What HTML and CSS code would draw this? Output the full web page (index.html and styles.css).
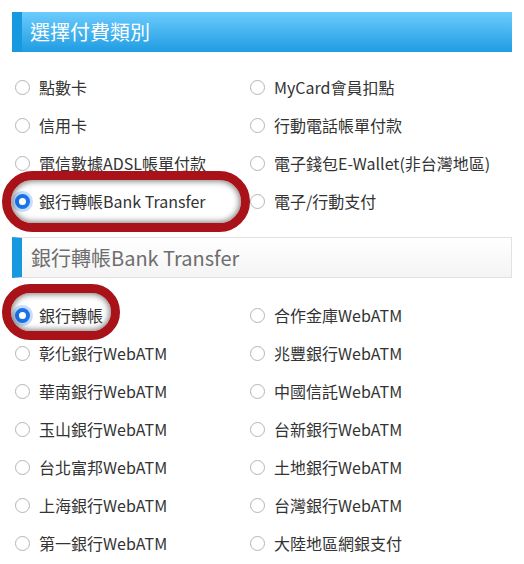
FILE: index.html
```html
<!DOCTYPE html>
<html lang="zh-Hant">
<head>
    <meta charset="UTF-8">
    <meta name="viewport" content="width=device-width, initial-scale=1.0">
    <title>選擇付費類別</title>
    <link rel="stylesheet" href="styles.css">
</head>
<body>
    <div class="page">
        <h2 class="title-main">選擇付費類別</h2>
        <div class="options options-top">
            <label class="option"><input type="radio" name="type"><span>點數卡</span></label>
            <label class="option"><input type="radio" name="type"><span>MyCard會員扣點</span></label>
            <label class="option"><input type="radio" name="type"><span>信用卡</span></label>
            <label class="option"><input type="radio" name="type"><span>行動電話帳單付款</span></label>
            <label class="option"><input type="radio" name="type"><span>電信數據ADSL帳單付款</span></label>
            <label class="option"><input type="radio" name="type"><span>電子錢包E-Wallet(非台灣地區)</span></label>
            <label class="option"><input type="radio" name="type" checked><span>銀行轉帳Bank Transfer</span></label>
            <label class="option"><input type="radio" name="type"><span>電子/行動支付</span></label>
        </div>

        <h2 class="title-sub">銀行轉帳Bank Transfer</h2>
        <div class="options options-bank">
            <label class="option"><input type="radio" name="bank" checked><span>銀行轉帳</span></label>
            <label class="option"><input type="radio" name="bank"><span>合作金庫WebATM</span></label>
            <label class="option"><input type="radio" name="bank"><span>彰化銀行WebATM</span></label>
            <label class="option"><input type="radio" name="bank"><span>兆豐銀行WebATM</span></label>
            <label class="option"><input type="radio" name="bank"><span>華南銀行WebATM</span></label>
            <label class="option"><input type="radio" name="bank"><span>中國信託WebATM</span></label>
            <label class="option"><input type="radio" name="bank"><span>玉山銀行WebATM</span></label>
            <label class="option"><input type="radio" name="bank"><span>台新銀行WebATM</span></label>
            <label class="option"><input type="radio" name="bank"><span>台北富邦WebATM</span></label>
            <label class="option"><input type="radio" name="bank"><span>土地銀行WebATM</span></label>
            <label class="option"><input type="radio" name="bank"><span>上海銀行WebATM</span></label>
            <label class="option"><input type="radio" name="bank"><span>台灣銀行WebATM</span></label>
            <label class="option"><input type="radio" name="bank"><span>第一銀行WebATM</span></label>
            <label class="option"><input type="radio" name="bank"><span>大陸地區網銀支付</span></label>
        </div>

        <!-- red marker rings drawn over the screenshot -->
        <div class="marker marker-type"></div>
        <div class="marker marker-bank"></div>
    </div>
</body>
</html>
```

FILE: styles.css
```css
body {
    margin: 0;
    background: #fff;
    font-family: "Noto Sans CJK TC", "Noto Sans", sans-serif;
    color: #333;
}
.page {
    position: relative;
    width: 524px;
    height: 564px;
    padding-top: 12px;
    box-sizing: border-box;
}
.title-main {
    margin: 0 12px 0 12px;
    height: 40px;
    padding-left: 8px;
    border-left: 10px solid #1799df;
    background: linear-gradient(#6ccbfd, #1f9de2);
    color: #fff;
    font-size: 20px;
    font-weight: normal;
    line-height: 40px;
}
.title-sub {
    margin: 0 12px 0 12px;
    height: 39px;
    padding-left: 9px;
    border: 1px solid #e2e2e2;
    border-left: 10px solid #1799df;
    background: linear-gradient(#ffffff, #f4f4f4);
    color: #6e6e6e;
    font-size: 20px;
    font-weight: normal;
    line-height: 39px;
}
.options {
    display: grid;
    grid-template-columns: 235px 1fr;
    padding-left: 15px;
}
.options-top {
    padding-top: 16px;
    padding-bottom: 17px;
}
.options-bank {
    padding-top: 18px;
}
.option {
    display: flex;
    align-items: center;
    height: 38px;
    font-size: 16px;
    white-space: nowrap;
}
.option input {
    appearance: none;
    margin: 0 9px 0 0;
    width: 15px;
    height: 15px;
    border: 1px solid #b5b5b5;
    border-radius: 50%;
    background: #fff;
    box-sizing: border-box;
    flex: none;
}
.option input:checked {
    border: 4.5px solid #1a73e8;
    box-shadow: 0 0 0 3px #c6ddfb;
}
.marker {
    position: absolute;
    border: 9px solid #a81218;
    border-radius: 32px;
    box-shadow: inset 0 0 6px 1px rgba(0, 0, 0, 0.55);
}
.marker-type {
    left: 2px;
    top: 171px;
    width: 230px;
    height: 43px;
}
.marker-bank {
    left: 2px;
    top: 284px;
    width: 100px;
    height: 38px;
}
```
